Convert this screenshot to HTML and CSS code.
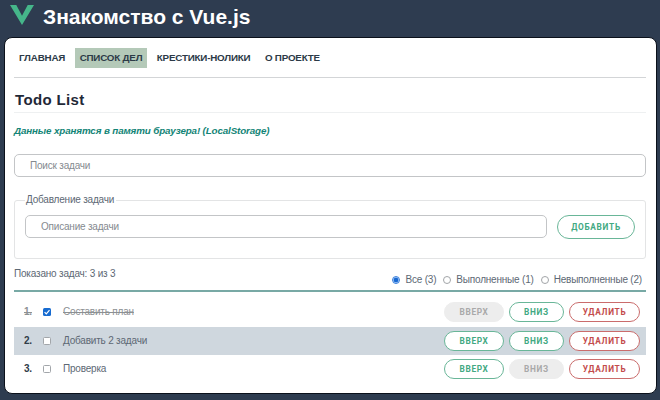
FILE: index.html
```html
<!DOCTYPE html>
<html lang="ru">
<head>
<meta charset="utf-8">
<title>Знакомство с Vue.js</title>
<link rel="stylesheet" href="styles.css">
</head>
<body>
<header class="header">
  <svg class="logo" viewBox="0 0 24 20" aria-hidden="true"><path d="M0 0h6.3L12 10.8 17.7 0H24L12 20z" fill="#45b68a"/></svg>
  <h1 class="title">Знакомство с Vue.js</h1>
</header>
<main class="panel">
  <nav class="nav">
    <a class="link">ГЛАВНАЯ</a><a class="link active">СПИСОК ДЕЛ</a><a class="link">КРЕСТИКИ-НОЛИКИ</a><a class="link">О ПРОЕКТЕ</a>
  </nav>
  <h2 class="heading">Todo List</h2>
  <p class="note">Данные хранятся в памяти браузера! (LocalStorage)</p>
  <input class="field search" placeholder="Поиск задачи">
  <fieldset class="add">
    <legend>Добавление задачи</legend>
    <div class="add-row">
      <input class="field" placeholder="Описание задачи">
      <button class="btn btn-add">ДОБАВИТЬ</button>
    </div>
  </fieldset>
  <div class="summary">
    <span class="shown">Показано задач: 3 из 3</span>
    <div class="filters">
      <label><i class="radio on"></i>Все (3)</label>
      <label><i class="radio"></i>Выполненные (1)</label>
      <label><i class="radio"></i>Невыполненные (2)</label>
    </div>
  </div>
  <div class="list">
    <div class="row done">
      <span class="num">1.</span>
      <i class="check on"><svg viewBox="0 0 8 8"><path d="M1.6 4.1l1.7 1.7 3.2-3.6" fill="none" stroke="#fff" stroke-width="1.2"/></svg></i>
      <span class="task">Составить план</span>
      <button class="btn up" disabled>ВВЕРХ</button><button class="btn down">ВНИЗ</button><button class="btn remove">УДАЛИТЬ</button>
    </div>
    <div class="row even">
      <span class="num">2.</span>
      <i class="check"></i>
      <span class="task">Добавить 2 задачи</span>
      <button class="btn up">ВВЕРХ</button><button class="btn down">ВНИЗ</button><button class="btn remove">УДАЛИТЬ</button>
    </div>
    <div class="row">
      <span class="num">3.</span>
      <i class="check"></i>
      <span class="task">Проверка</span>
      <button class="btn up">ВВЕРХ</button><button class="btn down" disabled>ВНИЗ</button><button class="btn remove">УДАЛИТЬ</button>
    </div>
  </div>
</main>
</body>
</html>
```
FILE: styles.css
```css
* { box-sizing: border-box; }
body {
  margin: 0;
  height: 400px;
  overflow: hidden;
  background: #2e3c50;
  color: #5d6874;
  font: 10px/12px "Liberation Sans", Arial, sans-serif;
  letter-spacing: -.2px;
}
.header { display: flex; height: 37px; padding: 5px 0 0 10px; }
.logo { width: 24px; height: 20px; flex: none; }
.title { margin: 0 0 0 9px; font-size: 21px; line-height: 24px; letter-spacing: 0; color: #fff; white-space: nowrap; }
.panel {
  width: 653px;
  height: 357px;
  margin-left: 4px;
  padding: 10px 10px 0 9px;
  border: 1px solid #0b111b;
  border-radius: 8px;
  background: #fff;
}
.nav { display: flex; gap: 5px; height: 30px; border-bottom: 1px solid #d3d5d7; }
.link {
  height: 20px;
  padding: 0 4.5px 0 5px;
  font-size: 9.8px;
  line-height: 20px;
  letter-spacing: -.2px;
  font-weight: bold;
  color: #2c3a47;
  white-space: nowrap;
}
.active { background: #b4c9b8; }
.heading {
  height: 35px;
  margin: 0;
  padding: 13px 0 0 1px;
  border-bottom: 1px solid #eef0f1;
  font: bold 15px/18px "Liberation Sans", Arial, sans-serif;
  letter-spacing: .35px;
  color: #1f2937;
}
.note { margin: 12px 0 17px; font-size: 9.8px; letter-spacing: -.13px; font-weight: bold; font-style: italic; color: #128476; white-space: nowrap; }
.field {
  display: block;
  width: 100%;
  height: 23px;
  margin: 0;
  padding: 0 15px;
  border: 1px solid #c3c5c7;
  border-radius: 5px;
  background: #fff;
  font: 10px/12px "Liberation Sans", Arial, sans-serif;
  letter-spacing: -.2px;
}
.field::placeholder { color: #858a8f; opacity: 1; }
.add { height: 65px; margin: 17px 0 0; padding: 9px 10px 0; border: 1px solid #e3e4e5; border-radius: 3px; }
.add legend { padding: 0 2px 0 1px; line-height: 12px; }
.add-row { display: flex; gap: 10px; }
.add-row .field { flex: 1; }
.btn {
  flex: none;
  height: 20px;
  margin: 0;
  padding: 0;
  border: 1px solid #69b698;
  border-radius: 12px;
  background: #fff;
  color: #42a982;
  font: bold 8.3px/10px Roboto, "Liberation Sans", sans-serif;
  letter-spacing: .7px;
}
.btn-add { width: 78px; height: 24px; }
.summary { display: flex; justify-content: space-between; height: 33px; border-bottom: 2px solid #78a9a5; }
.shown { padding-top: 9px; }
.filters { display: flex; gap: 7px; padding: 15px 4px 0 0; }
.filters label { display: flex; align-items: center; height: 12px; white-space: nowrap; }
.radio { width: 8px; height: 8px; margin-right: 5px; border: 1px solid #a2a5a8; border-radius: 50%; background: #fff; }
.radio.on { border-color: #3a80dc; background: radial-gradient(circle, #1768d2 0 2px, #b9d5fa 2.7px); }
.list { padding-top: 6px; }
.row { display: flex; align-items: center; height: 28.5px; padding: 0 6px 0 10px; }
.even { background: #cfd7de; }
.num { width: 19px; font-weight: bold; color: #303c48; }
.check { width: 8px; height: 8px; margin-right: 12px; border: 1px solid #a2a6aa; border-radius: 1.5px; background: #fff; }
.check.on { border: 0; background: #176bd0; }
.check svg { display: block; width: 8px; height: 8px; }
.task { flex: 1; }
.done .num, .done .task { color: #8c9093; text-decoration: line-through; }
.up { width: 60px; }
.down { width: 55px; margin-left: 5px; }
.remove { width: 71px; margin-left: 5px; border-color: #ca6c6c; color: #c34b4b; }
.btn:disabled { border-color: #ededed; background: #ededed; color: #a9a9a9; }
```
